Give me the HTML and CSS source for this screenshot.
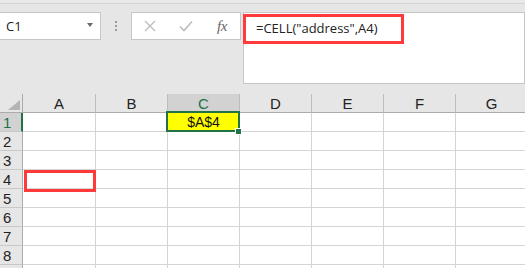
FILE: index.html
```html
<!DOCTYPE html>
<html>
<head>
<meta charset="utf-8">
<link rel="stylesheet" href="styles.css">
</head>
<body>
<div class="app">
  <div class="strip"></div>
  <div class="bar">
    <div class="namebox">
      <span class="name">C1</span>
      <span class="caret"></span>
    </div>
    <div class="dots"><i></i><i></i><i></i></div>
    <div class="btns">
      <span class="btn"><svg width="12" height="12" viewBox="0 0 12 12"><path d="M1 1L11 11M11 1L1 11" stroke="#bdbdbd" stroke-width="1.4" fill="none"/></svg></span>
      <span class="btn"><svg width="14" height="12" viewBox="0 0 14 12"><path d="M1 6.5L5 10.5L13 1.5" stroke="#bdbdbd" stroke-width="1.6" fill="none"/></svg></span>
      <span class="btn fx">fx</span>
    </div>
    <div class="formula">=CELL("address",A4)</div>
  </div>
  <div class="hl hl-formula"></div>
  <div class="sheet">
    <div class="corner"><span class="tri"></span></div>
    <div class="ch">A</div><div class="ch">B</div><div class="ch sel">C</div><div class="ch">D</div><div class="ch">E</div><div class="ch">F</div><div class="ch">G</div>

    <div class="rh sel">1</div><div class="c"></div><div class="c"></div><div class="c val">$A$4</div><div class="c"></div><div class="c"></div><div class="c"></div><div class="c"></div>
    <div class="rh">2</div><div class="c"></div><div class="c"></div><div class="c"></div><div class="c"></div><div class="c"></div><div class="c"></div><div class="c"></div>
    <div class="rh">3</div><div class="c"></div><div class="c"></div><div class="c"></div><div class="c"></div><div class="c"></div><div class="c"></div><div class="c"></div>
    <div class="rh">4</div><div class="c"></div><div class="c"></div><div class="c"></div><div class="c"></div><div class="c"></div><div class="c"></div><div class="c"></div>
    <div class="rh">5</div><div class="c"></div><div class="c"></div><div class="c"></div><div class="c"></div><div class="c"></div><div class="c"></div><div class="c"></div>
    <div class="rh">6</div><div class="c"></div><div class="c"></div><div class="c"></div><div class="c"></div><div class="c"></div><div class="c"></div><div class="c"></div>
    <div class="rh">7</div><div class="c"></div><div class="c"></div><div class="c"></div><div class="c"></div><div class="c"></div><div class="c"></div><div class="c"></div>
    <div class="rh">8</div><div class="c"></div><div class="c"></div><div class="c"></div><div class="c"></div><div class="c"></div><div class="c"></div><div class="c"></div>
    <div class="rh"></div><div class="c"></div><div class="c"></div><div class="c"></div><div class="c"></div><div class="c"></div><div class="c"></div><div class="c"></div>

    <div class="selbox"></div>
    <div class="handle"></div>
    <div class="hl hl-a4"></div>
  </div>
</div>
</body>
</html>
```

FILE: styles.css
```css
* { box-sizing: border-box; }
html, body { margin: 0; padding: 0; }
body { background: #e6e6e6; }
.app {
  position: relative;
  width: 525px;
  height: 268px;
  overflow: hidden;
  background: #e6e6e6;
  font-family: "Open Sans", "Noto Sans", sans-serif;
}
.strip {
  height: 4px;
  background: #e9e9e9;
  border-bottom: 1px solid #d4d4d4;
}
.bar {
  display: flex;
  align-items: flex-start;
  margin-top: 8px;
  margin-bottom: 10px;
  height: 72px;
}
.namebox {
  width: 101px;
  height: 28px;
  background: #fff;
  border: 1px solid #c6c6c6;
  border-left: none;
  display: flex;
  align-items: center;
  justify-content: space-between;
  padding: 0 7px 0 6px;
}
.name {
  font-size: 13px;
  color: #222;
  line-height: 18px;
}
.caret {
  width: 0;
  height: 0;
  border-left: 3.5px solid transparent;
  border-right: 3.5px solid transparent;
  border-top: 4px solid #6a6a6a;
  margin-top: -3px;
}
.dots {
  width: 30px;
  height: 28px;
  display: flex;
  flex-direction: column;
  align-items: center;
  justify-content: center;
  gap: 2px;
}
.dots i {
  display: block;
  width: 2px;
  height: 2px;
  background: #9a9a9a;
}
.btns {
  width: 110px;
  height: 28px;
  background: #fff;
  border: 1px solid #c6c6c6;
  display: flex;
  align-items: center;
  padding-left: 0;
}
.btn {
  width: 36px;
  display: flex;
  justify-content: center;
  align-items: center;
}
.fx {
  font-family: "Liberation Serif", serif;
  font-style: italic;
  font-size: 15px;
  color: #666;
  letter-spacing: -0.5px;
  line-height: 16px;
}
.formula {
  margin-left: 2px;
  width: 282px;
  height: 72px;
  background: #fff;
  border: 1px solid #c6c6c6;
  font-size: 13px;
  color: #222;
  padding: 6px 0 0 12px;
  line-height: 18px;
}
.hl {
  position: absolute;
  border: 3px solid #ff3a3a;
}
.hl-formula {
  left: 243px;
  top: 14px;
  width: 161px;
  height: 30px;
}
.sheet {
  position: relative;
  display: grid;
  grid-template-columns: 23px 73px repeat(6, 72px);
  grid-auto-rows: 19px;
  font-family: "Liberation Sans", Arial, sans-serif;
}
.corner {
  position: relative;
  background: #e6e6e6;
  border-right: 1px solid #ababab;
  border-bottom: 1px solid #ababab;
}
.tri {
  position: absolute;
  right: 2px;
  bottom: 2px;
  width: 0;
  height: 0;
  border-left: 12px solid transparent;
  border-bottom: 10px solid #b4b4b4;
}
.ch {
  background: #e6e6e6;
  border-right: 1px solid #bdbdbd;
  border-bottom: 1px solid #ababab;
  text-align: center;
  font-size: 15px;
  line-height: 20px;
  color: #222;
}
.ch.sel {
  background: #d2d2d2;
  color: #217346;
  border-bottom: 2px solid #217346;
}
.rh {
  background: #e6e6e6;
  border-right: 1px solid #ababab;
  border-bottom: 1px solid #c8c8c8;
  font-size: 15px;
  line-height: 19px;
  padding-left: 3px;
  color: #222;
}
.rh.sel {
  background: #d2d2d2;
  color: #217346;
  border-right: 2px solid #217346;
}
.c {
  background: #fff;
  border-right: 1px solid #d4d4d4;
  border-bottom: 1px solid #d4d4d4;
}
.c.val {
  background: #ffff00;
  text-align: center;
  font-size: 14px;
  line-height: 19px;
  color: #111;
}
.selbox {
  position: absolute;
  left: 166px;
  top: 17px;
  width: 74px;
  height: 21px;
  border: 2px solid #217346;
}
.handle {
  position: absolute;
  left: 235px;
  top: 34px;
  width: 7px;
  height: 7px;
  background: #217346;
  border: 1px solid #fff;
}
.hl-a4 {
  left: 24px;
  top: 76px;
  width: 72px;
  height: 22px;
}
```
